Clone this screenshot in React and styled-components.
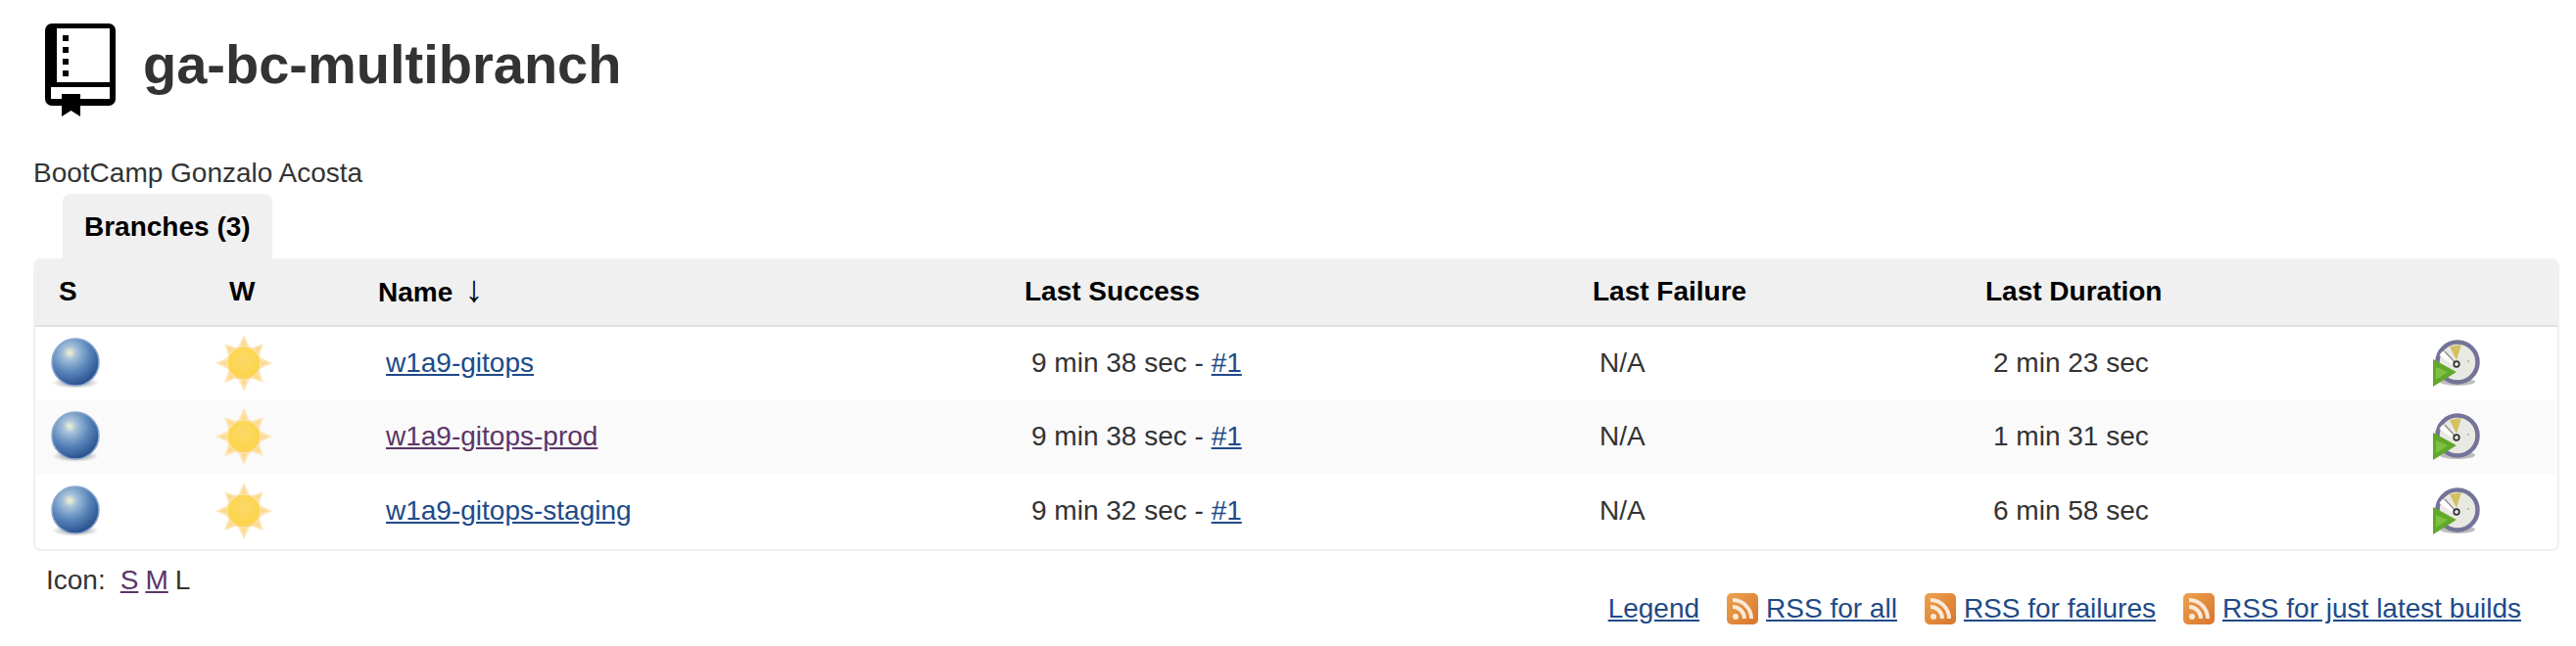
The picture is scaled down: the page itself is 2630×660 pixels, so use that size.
import styled, { createGlobalStyle } from "styled-components";

const GlobalStyle = createGlobalStyle`
  html, body {
    margin: 0;
    padding: 0;
    background: #fff;
    color: #333;
    font-family: "Liberation Sans", Arial, sans-serif;
  }
`;

const Page = styled.div`
  width: 2630px;
  height: 660px;
  overflow: hidden;
  padding: 24px 17px 0 34px;
  box-sizing: border-box;
`;

const Header = styled.div`
  display: flex;
  align-items: flex-start;
  gap: 28px;
  padding-left: 12px;
  height: 134px;
`;

const Title = styled.h1`
  margin: 0;
  font-size: 56px;
  line-height: 84px;
  font-weight: 700;
  color: #333;
`;

const Desc = styled.div`
  font-size: 28px;
  line-height: 38px;
  height: 40px;
  color: #333;
`;

const TabBar = styled.div`
  display: flex;
  padding-left: 30px;
`;

const Tab = styled.div`
  height: 66px;
  padding: 2px 22px 0;
  box-sizing: border-box;
  display: flex;
  align-items: center;
  background: #f0f0f0;
  border-radius: 8px 8px 0 0;
  font-size: 28px;
  font-weight: 700;
  color: #000;
`;

const TableWrap = styled.div`
  width: 2579px;
  box-sizing: border-box;
  border: 2px solid #f0f0f0;
  border-top: none;
  border-radius: 8px;
  overflow: hidden;
`;

const Table = styled.table`
  width: 100%;
  table-layout: fixed;
  border-collapse: collapse;
  font-size: 28px;
`;

const Th = styled.th`
  width: ${(p) => p.$w || "auto"};
  height: 69px;
  padding: 0 0 0 ${(p) => p.$pad || 24}px;
  box-sizing: border-box;
  background: #f0f0f0;
  border-bottom: 2px solid #e0e0e0;
  text-align: left;
  font-weight: 700;
  color: #000;
`;

const SortArrow = styled.span`
  margin-left: 12px;
  font-size: 38px;
  line-height: 28px;
  font-weight: 400;
`;

const Row = styled.tr`
  height: 76px;
  background: ${(p) => (p.$alt ? "#fafafa" : "#fff")};
`;

const Td = styled.td`
  padding: 0 0 2px ${(p) => p.$pad || 31}px;
  color: #333;
  white-space: nowrap;
`;

const IconBox = styled.span`
  display: block;
  line-height: 0;
  svg {
    display: block;
    filter: blur(0.6px);
  }
`;

const Link = styled.a`
  color: ${(p) => (p.$visited ? "#5c3566" : "#204a87")};
  text-decoration: underline;
`;

const Footer = styled.div`
  display: flex;
  justify-content: space-between;
  align-items: flex-start;
  font-size: 28px;
`;

const IconSizes = styled.div`
  display: flex;
  gap: 7px;
  padding: 12px 0 0 13px;
  line-height: 36px;
  color: #333;
`;

const IconLabel = styled.span`
  margin-right: 8px;
`;

const FeedLinks = styled.div`
  display: flex;
  align-items: center;
  padding: 41px 39px 0 0;
  line-height: 36px;
`;

const FeedItem = styled.div`
  display: flex;
  align-items: center;
  gap: 8px;
  margin-left: 28px;
`;

const BookIcon = () => (
  <svg width="72" height="96" viewBox="0 0 72 96" fill="#000">
    <path
      fillRule="evenodd"
      d="M7 0H65a7 7 0 0 1 7 7V77a7 7 0 0 1-7 7H7a7 7 0 0 1-7-7V7a7 7 0 0 1 7-7ZM12 5V60H66V5ZM6 65V77H66V65Z"
    />
    <rect x="18" y="12" width="6" height="6" />
    <rect x="18" y="24" width="6" height="6" />
    <rect x="18" y="36" width="6" height="6" />
    <rect x="18" y="48" width="6" height="6" />
    <path d="M17 72H36V95L26.5 89L17 95Z" />
  </svg>
);

const BallIcon = ({ id }) => (
  <svg width="50" height="52" viewBox="0 0 50 52">
    <defs>
      <radialGradient id={id} cx="0.38" cy="0.3" r="0.72">
        <stop offset="0" stopColor="#f4f3cf" />
        <stop offset="0.2" stopColor="#a5c0da" />
        <stop offset="0.58" stopColor="#5885ba" />
        <stop offset="1" stopColor="#284f8c" />
      </radialGradient>
      <radialGradient id={id + "s"}>
        <stop offset="0" stopColor="#666" stopOpacity="0.9" />
        <stop offset="1" stopColor="#888" stopOpacity="0" />
      </radialGradient>
    </defs>
    <ellipse cx="25" cy="46" rx="24" ry="6" fill={`url(#${id}s)`} />
    <circle cx="25" cy="25" r="24" fill={`url(#${id})`} stroke="#8aa8cf" strokeWidth="1.5" />
  </svg>
);

const SUN_RAYS = [0, 45, 90, 135, 180, 225, 270, 315];

const SunIcon = ({ id }) => (
  <svg width="60" height="58" viewBox="0 0 60 58">
    <defs>
      <radialGradient id={id} cx="0.5" cy="0.4" r="0.62">
        <stop offset="0" stopColor="#fbd96a" />
        <stop offset="0.75" stopColor="#fdd54c" />
        <stop offset="1" stopColor="#fbd06e" />
      </radialGradient>
    </defs>
    {SUN_RAYS.map((a) => (
      <g key={a} transform={`rotate(${a} 30 29)`}>
        <path d={a % 90 ? "M30 1L36 13H24Z" : "M30 0L36 13H24Z"} fill="#fde5b4" />
        <path d="M30 5L33 12H27Z" fill="#fbd98c" />
      </g>
    ))}
    <circle cx="30" cy="29" r="17" fill={`url(#${id})`} stroke="#fce3ad" strokeWidth="1.5" />
  </svg>
);

const ClockIcon = () => (
  <svg width="48" height="48" viewBox="0 0 48 48">
    <ellipse cx="25" cy="43" rx="18" ry="4" fill="#888" opacity="0.55" />
    <circle cx="25" cy="23" r="20.5" fill="#e9e9e3" stroke="#74749a" strokeWidth="4.5" />
    <path d="M17 7L29 5L24 21Z" fill="#d3c060" />
    <path d="M8 14L23 25" stroke="#fff" strokeWidth="5" />
    <path d="M12 12L23 24" stroke="#8a8a8a" strokeWidth="1.2" />
    <circle cx="24" cy="25" r="2.8" fill="none" stroke="#333" strokeWidth="1.8" />
    <circle cx="36" cy="22" r="1" fill="#aaa" />
    <path d="M0 20L24 33L0 48Z" fill="#62a82b" />
    <path d="M3 28L15 33L3 41Z" fill="#7cc240" />
  </svg>
);

const RssIcon = ({ id }) => (
  <svg width="32" height="32" viewBox="0 0 32 32">
    <defs>
      <linearGradient id={id} x1="0" y1="0" x2="1" y2="1">
        <stop offset="0" stopColor="#eba34f" />
        <stop offset="1" stopColor="#d9742e" />
      </linearGradient>
    </defs>
    <rect width="32" height="32" rx="5" fill={`url(#${id})`} />
    <circle cx="9" cy="24" r="3" fill="#fbe9d8" />
    <path
      d="M6 14A12 12 0 0 1 18 26M6 7A19 19 0 0 1 25 26"
      fill="none"
      stroke="#fbe9d8"
      strokeWidth="4"
    />
  </svg>
);

const BRANCHES = [
  { name: "w1a9-gitops", success: "9 min 38 sec", duration: "2 min 23 sec" },
  { name: "w1a9-gitops-prod", success: "9 min 38 sec", duration: "1 min 31 sec", visited: true },
  { name: "w1a9-gitops-staging", success: "9 min 32 sec", duration: "6 min 58 sec" },
];

const FEEDS = ["RSS for all", "RSS for failures", "RSS for just latest builds"];

export default function App() {
  return (
    <Page>
      <GlobalStyle />
      <Header>
        <BookIcon />
        <Title>ga-bc-multibranch</Title>
      </Header>
      <Desc>BootCamp Gonzalo Acosta</Desc>
      <TabBar>
        <Tab>Branches (3)</Tab>
      </TabBar>
      <TableWrap>
        <Table>
          <thead>
            <tr>
              <Th $w="174px">S</Th>
              <Th $w="153px">W</Th>
              <Th $w="659px" $pad={23}>
                Name<SortArrow>↓</SortArrow>
              </Th>
              <Th $w="580px">Last Success</Th>
              <Th $w="401px">Last Failure</Th>
              <Th $w="457px">Last Duration</Th>
              <Th />
            </tr>
          </thead>
          <tbody>
            {BRANCHES.map((b, i) => (
              <Row key={b.name} $alt={i === 1}>
                <Td $pad={16}>
                  <IconBox>
                    <BallIcon id={`ball${i}`} />
                  </IconBox>
                </Td>
                <Td $pad={9}>
                  <IconBox>
                    <SunIcon id={`sun${i}`} />
                  </IconBox>
                </Td>
                <Td>
                  <Link href="#" $visited={b.visited}>
                    {b.name}
                  </Link>
                </Td>
                <Td>
                  {b.success} - <Link href="#">#1</Link>
                </Td>
                <Td>N/A</Td>
                <Td $pad={32}>{b.duration}</Td>
                <Td $pad={24}>
                  <IconBox>
                    <ClockIcon />
                  </IconBox>
                </Td>
              </Row>
            ))}
          </tbody>
        </Table>
      </TableWrap>
      <Footer>
        <IconSizes>
          <IconLabel>Icon:</IconLabel>
          <Link href="#" $visited>
            S
          </Link>
          <Link href="#" $visited>
            M
          </Link>
          <span>L</span>
        </IconSizes>
        <FeedLinks>
          <Link href="#">Legend</Link>
          {FEEDS.map((f, i) => (
            <FeedItem key={f}>
              <RssIcon id={`rss${i}`} />
              <Link href="#">{f}</Link>
            </FeedItem>
          ))}
        </FeedLinks>
      </Footer>
    </Page>
  );
}
